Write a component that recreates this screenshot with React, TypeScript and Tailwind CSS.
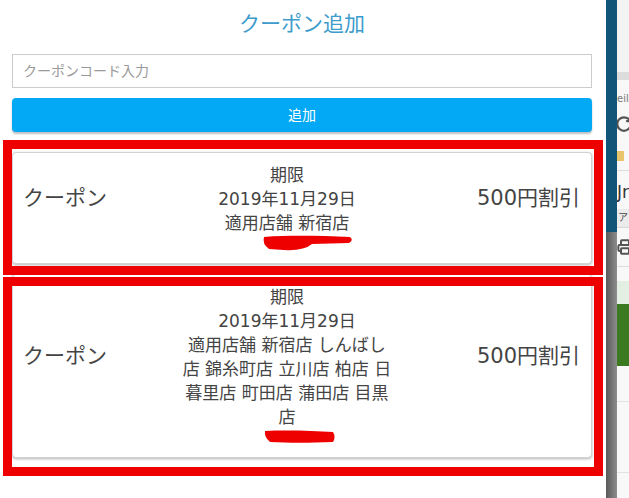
import { Printer, RotateCw } from "lucide-react";

type Coupon = {
  name: string;
  limit: string;
  shops: string[];
  discount: string;
  frame: string;
  mark: "long" | "short";
};

const coupons: Coupon[] = [
  {
    name: "クーポン",
    limit: "2019年11月29日",
    shops: ["適用店舗 新宿店"],
    discount: "500円割引",
    frame: "-left-[9px] -right-[11px] -top-[12px] -bottom-[11px]",
    mark: "long",
  },
  {
    name: "クーポン",
    limit: "2019年11月29日",
    // wrapped the same way the app wraps it
    shops: ["適用店舗 新宿店 しんばし", "店 錦糸町店 立川店 柏店 日", "暮里店 町田店 蒲田店 目黒", "店"],
    discount: "500円割引",
    frame: "-left-[9px] -right-[11px] top-[3px] -bottom-[18px]",
    mark: "short",
  },
];

// hand-drawn redaction over the last line
const Scribble = ({ kind }: { kind: "long" | "short" }) =>
  kind === "long" ? (
    <svg width="92" height="17" viewBox="0 0 92 17" className="ml-[42px] shrink-0">
      <path
        d="M2 2 C 30 0, 60 1, 88 2 Q 92 5 87 8 L 50 9 Q 42 16 22 15 L 7 14 Q 0 9 2 2 Z"
        fill="#ee0000"
      />
    </svg>
  ) : (
    <svg width="72" height="14" viewBox="0 0 72 14" className="ml-[26px] mt-px shrink-0">
      <path d="M1 1 C 25 0, 50 1, 69 2 Q 72 7 69 12 C 45 13, 25 13, 6 12 Q 0 7 1 1 Z" fill="#ee0000" />
    </svg>
  );

const CouponCard = ({ c }: { c: Coupon }) => (
  <div className="relative">
    <div className="flex items-center justify-between rounded-[4px] border border-[#d2d2d2] bg-white pl-[10px] pr-[11px] text-[#444] shadow-[0_1px_3px_rgba(0,0,0,0.3)]">
      <div className="pb-[18px] text-[21px]">{c.name}</div>
      <div className="mr-[10px] w-[217px] pt-[10px] pb-[4px] text-center text-[17px] leading-[24px] whitespace-nowrap">
        <div>期限</div>
        <div>{c.limit}</div>
        {c.shops.map((s) => (
          <div key={s}>{s}</div>
        ))}
        <div className="flex h-[24px] justify-center">
          <Scribble kind={c.mark} />
        </div>
      </div>
      <div className="pb-[18px] text-[21px]">{c.discount}</div>
    </div>
    <div className={`pointer-events-none absolute z-10 border-[9px] border-[#ee0000] ${c.frame}`} />
  </div>
);

export default function App() {
  return (
    <div className="flex h-[498px] w-[629px] overflow-hidden bg-white font-['DejaVu_Sans','Noto_Sans_CJK_JP',sans-serif]">
      <div className="w-[606px] shrink-0 bg-white pl-3 pr-[14px]">
        <h1 className="pt-[9px] text-center text-[21px] leading-[30px] font-normal text-[#3d9ccc]">クーポン追加</h1>
        <input
          className="mt-[15px] block h-[34px] w-full border border-[#cccccc] px-[10px] text-[14px] text-[#555] outline-none placeholder:text-[#9a9a9a]"
          placeholder="クーポンコード入力"
        />
        <button className="mt-[10px] block h-[34px] w-full rounded-[4px] bg-[#03a9f4] text-[14px] text-white shadow-[0_2px_2px_rgba(0,0,0,0.25)]">
          追加
        </button>
        <div className="mt-[20px] flex flex-col gap-[10px]">
          {coupons.map((c, i) => (
            <CouponCard key={i} c={c} />
          ))}
        </div>
      </div>

      {/* dimmed strip between the drawer and the page */}
      <div className="flex w-[11px] shrink-0 flex-col">
        <div className="h-[232px] bg-[#115678]" />
        <div className="flex-1 bg-linear-to-r from-[#5a5a5a] to-[#8e8e8e]" />
      </div>

      {/* page behind, mostly hidden */}
      <div className="flex min-w-0 flex-1 flex-col overflow-hidden bg-[#f8f8f8] text-[#444]">
        <div className="h-[72px] shrink-0 bg-[#f3f3f3]" />
        <div className="h-[8px] shrink-0 bg-[#dcdcdc]" />
        <div className="mt-[11px] h-[16px] shrink-0 text-[10px] leading-[16px] whitespace-nowrap text-[#777]">eil</div>
        <div className="mt-[8px] h-[20px] shrink-0">
          <RotateCw size={18} strokeWidth={3} className="-ml-[2px] text-[#555]" />
        </div>
        <div className="mt-[16px] h-[10px] w-[7px] shrink-0 bg-[#e8c56a]" />
        <div className="mt-[9px] h-px shrink-0 bg-[#dddddd]" />
        <div className="mt-[10px] h-[22px] shrink-0 text-[17px] leading-[22px] whitespace-nowrap text-[#333]">Jr</div>
        <div className="mt-[6px] h-[18px] shrink-0 bg-[#ebebeb] pl-px text-[10px] leading-[18px] whitespace-nowrap">ア</div>
        <div className="h-px shrink-0 bg-[#d8d8d8]" />
        <div className="mt-[12px] h-[14px] shrink-0">
          <Printer size={16} strokeWidth={3} className="-mt-px text-[#555]" />
        </div>
        <div className="mt-[12px] h-px shrink-0 bg-[#dddddd]" />
        <div className="mt-[14px] h-[23px] shrink-0 bg-[#e4efe4]" />
        <div className="h-[62px] shrink-0 bg-[#3c7a22]" />
        <div className="mt-[35px] h-px shrink-0 bg-[#e2e2e2]" />
        <div className="mt-[70px] h-px shrink-0 bg-[#e2e2e2]" />
      </div>
    </div>
  );
}
